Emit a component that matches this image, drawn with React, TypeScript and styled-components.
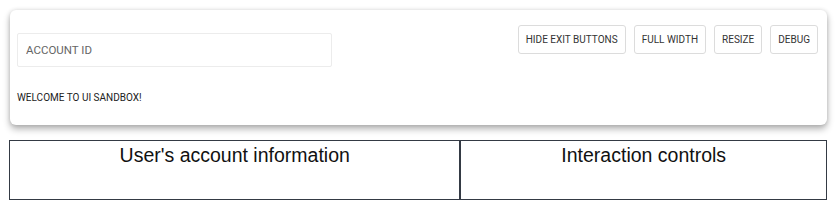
import React from "react";
import styled, { createGlobalStyle } from "styled-components";

const GlobalStyle = createGlobalStyle`
  html, body {
    margin: 0;
    padding: 0;
    background: #ffffff;
  }
`;

const Page = styled.div`
  width: 837px;
  height: 210px;
  padding: 10px 10px 0 9px;
  box-sizing: border-box;
  display: flex;
  flex-direction: column;
`;

const Card = styled.div`
  margin-left: 1px;
  width: 817px;
  height: 115px;
  box-sizing: border-box;
  padding: 15px 9px 0 7px;
  background: #fff;
  border-radius: 6px;
  box-shadow: 0 0 4px rgba(0, 0, 0, 0.12), 0 4px 7px rgba(0, 0, 0, 0.3);
  display: flex;
  justify-content: space-between;
  font-family: Roboto, "Liberation Sans", sans-serif;
`;

const LeftColumn = styled.div`
  display: flex;
  flex-direction: column;
  padding-top: 8px;
`;

const AccountInput = styled.input`
  width: 315px;
  height: 34px;
  box-sizing: border-box;
  border: 1px solid #ececec;
  border-radius: 2px;
  padding: 0 8px;
  font-family: Roboto, "Liberation Sans", sans-serif;
  font-size: 11.5px;
  color: #555;
  outline: none;
  &::placeholder {
    color: #666;
  }
`;

const Welcome = styled.div`
  margin-top: 25px;
  font-size: 10px;
  color: #222;
`;

const ButtonRow = styled.div`
  display: flex;
  gap: 8px;
  align-items: flex-start;
`;

const ToolButton = styled.button`
  height: 29px;
  padding: 0 7px;
  box-sizing: border-box;
  background: #fff;
  border: 1px solid #dcdcdc;
  border-radius: 3px;
  font-family: Roboto, "Liberation Sans", sans-serif;
  font-size: 10px;
  font-weight: 400;
  color: #333;
`;

const Legend = styled.div`
  margin-top: 15px;
  display: flex;
  height: 60px;
  font-family: "Liberation Sans", Arial, sans-serif;
`;

const LegendCell = styled.div<{ width: number }>`
  width: ${({ width }) => width}px;
  box-sizing: border-box;
  border: 1px solid #343a44;
  text-align: center;
  font-size: 19.5px;
  line-height: 22px;
  color: #111;
  padding-top: 3px;
`;

export default function App() {
  return (
    <>
      <GlobalStyle />
      <Page>
        <Card>
          <LeftColumn>
            <AccountInput placeholder="ACCOUNT ID" />
            <Welcome>WELCOME TO UI SANDBOX!</Welcome>
          </LeftColumn>
          <ButtonRow>
            <ToolButton>HIDE EXIT BUTTONS</ToolButton>
            <ToolButton>FULL WIDTH</ToolButton>
            <ToolButton>RESIZE</ToolButton>
            <ToolButton>DEBUG</ToolButton>
          </ButtonRow>
        </Card>
        <Legend>
          <LegendCell width={452}>User's account information</LegendCell>
          <LegendCell width={367}>Interaction controls</LegendCell>
        </Legend>
      </Page>
    </>
  );
}
